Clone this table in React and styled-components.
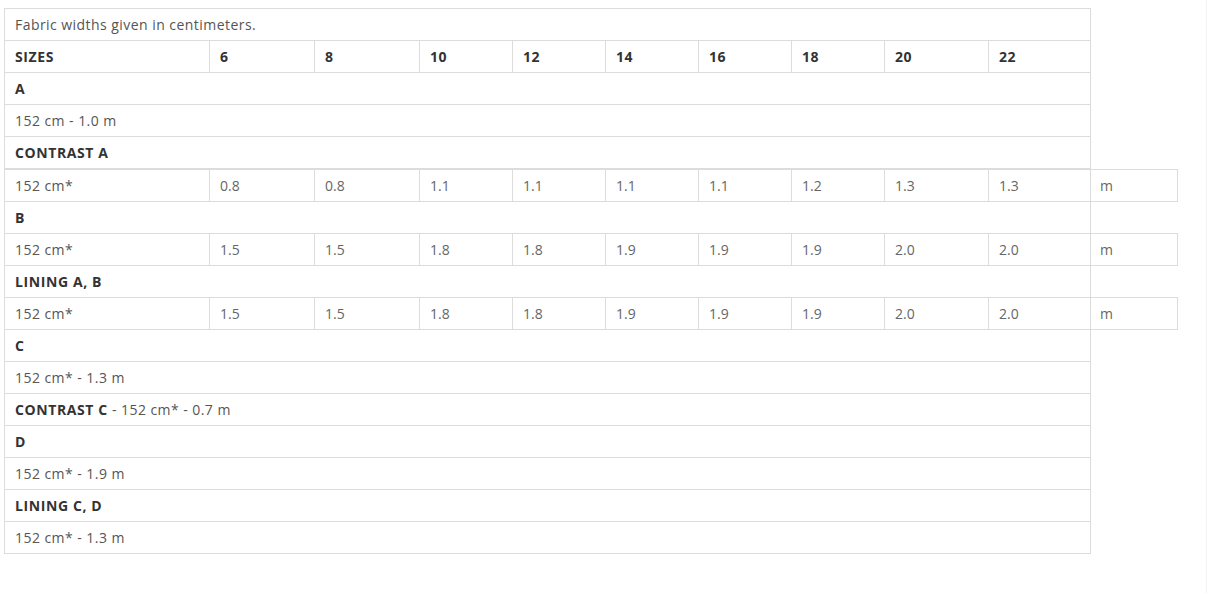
import React from "react";
import styled, { createGlobalStyle } from "styled-components";

const Global = createGlobalStyle`
  html, body { margin: 0; padding: 0; background: #fff; }
  body { font-family: "Open Sans", "Liberation Sans", sans-serif; }
`;

const Page = styled.div`
  box-sizing: border-box;
  width: 1207px;
  min-height: 593px;
  padding: 8px 0 0 4px;
  border-right: 1px solid #f3f3f3;
`;

const Table = styled.div`
  width: 1087px;
  box-sizing: border-box;
  border: 1px solid #dcdcdc;
  border-bottom: none;
  font-size: 14px;
  color: #555;
`;

const COLS = "204px 105px 105px 93px 93px 93px 93px 93px 104px 102px 88px";

const Row = styled.div`
  display: grid;
  grid-template-columns: ${COLS};
  height: 31px;
  border-bottom: 1px solid #dcdcdc;
  border-top: ${(p) => (p.$gap ? "1px solid #dcdcdc" : "none")};
`;

const Cell = styled.div`
  box-sizing: border-box;
  display: flex;
  align-items: center;
  padding: 0 0 1px 10px;
  border-left: ${(p) => (p.$first ? "none" : "1px solid #dcdcdc")};
  font-weight: ${(p) => (p.$bold ? 700 : 400)};
  color: ${(p) => (p.$bold ? "#333" : p.$num ? "#666" : "#555")};
  letter-spacing: ${(p) => (p.$bold ? "0.6px" : p.$num ? "0" : "0.45px")};
  white-space: nowrap;
  grid-column: ${(p) => (p.$span ? "1 / span 10" : "auto")};
`;

const Strong = styled.span`
  font-weight: 700;
  color: #333;
  letter-spacing: 0.6px;
`;

const Unit = styled.div`
  box-sizing: border-box;
  display: flex;
  align-items: center;
  margin: -1px 0;
  padding: 0 0 1px 10px;
  border: 1px solid #dcdcdc;
  border-left: none;
  color: #666;
`;

const SIZES = ["6", "8", "10", "12", "14", "16", "18", "20", "22"];

const rows = [
  { type: "text", text: "Fabric widths given in centimeters." },
  { type: "head" },
  { type: "label", text: "A" },
  { type: "text", text: "152 cm - 1.0 m" },
  { type: "label", text: "CONTRAST A" },
  { type: "data", label: "152 cm*", values: ["0.8", "0.8", "1.1", "1.1", "1.1", "1.1", "1.2", "1.3", "1.3"], gap: true },
  { type: "label", text: "B" },
  { type: "data", label: "152 cm*", values: ["1.5", "1.5", "1.8", "1.8", "1.9", "1.9", "1.9", "2.0", "2.0"] },
  { type: "label", text: "LINING A, B" },
  { type: "data", label: "152 cm*", values: ["1.5", "1.5", "1.8", "1.8", "1.9", "1.9", "1.9", "2.0", "2.0"] },
  { type: "label", text: "C" },
  { type: "text", text: "152 cm* - 1.3 m" },
  { type: "mixed", bold: "CONTRAST C", text: "- 152 cm* - 0.7 m" },
  { type: "label", text: "D" },
  { type: "text", text: "152 cm* - 1.9 m" },
  { type: "label", text: "LINING C, D" },
  { type: "text", text: "152 cm* - 1.3 m" },
];

function renderRow(r, i) {
  if (r.type === "head") {
    return (
      <Row key={i}>
        <Cell $first $bold>SIZES</Cell>
        {SIZES.map((s) => (
          <Cell key={s} $bold>{s}</Cell>
        ))}
      </Row>
    );
  }
  if (r.type === "data") {
    return (
      <Row key={i} $gap={r.gap}>
        <Cell $first>{r.label}</Cell>
        {r.values.map((v, j) => (
          <Cell key={j} $num>{v}</Cell>
        ))}
        <Unit>m</Unit>
      </Row>
    );
  }
  if (r.type === "mixed") {
    return (
      <Row key={i}>
        <Cell $first $span>
          <Strong>{r.bold}</Strong>&nbsp;{r.text}
        </Cell>
      </Row>
    );
  }
  return (
    <Row key={i}>
      <Cell $first $span $bold={r.type === "label"}>{r.text}</Cell>
    </Row>
  );
}

export default function App() {
  return (
    <Page>
      <Global />
      <Table>{rows.map(renderRow)}</Table>
    </Page>
  );
}
